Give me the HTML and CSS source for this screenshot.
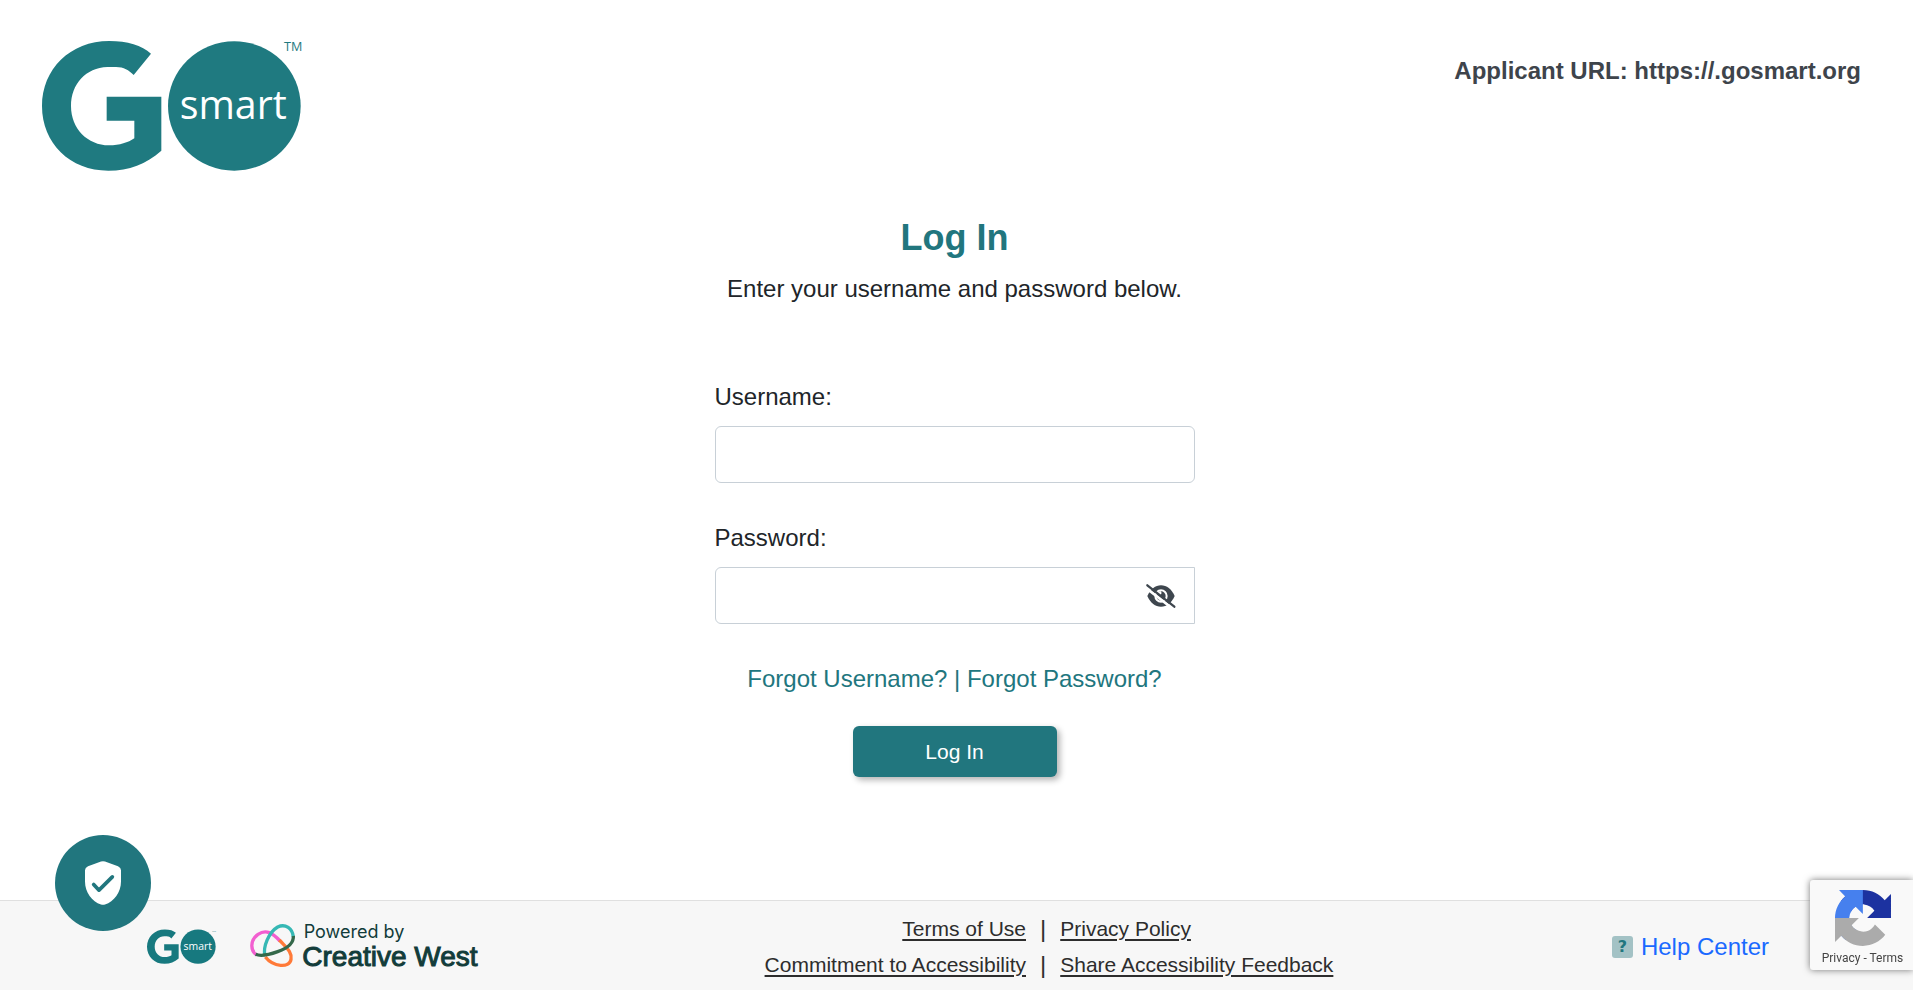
FILE: index.html
```html
<!DOCTYPE html>
<html lang="en">
<head>
<meta charset="utf-8">
<title>GO Smart - Log In</title>
<meta name="viewport" content="width=device-width, initial-scale=1">
<link rel="stylesheet" href="styles.css">
</head>
<body>
<header class="site-header">
  <svg class="logo" viewBox="66 60 780 393" role="img" aria-label="GO smart">
    <path fill="currentColor" d="M393 101L341 165C326 150 312 141 288 141H262C198 143 153 192 153 258C153 326 203 376 267 376C300 376 324 368 343 355V302H260V230H424V392C378 432 328 452 265 452C150 452 66 370 66 258C66 148 150 63 268 63C322 63 366 76 393 101Z"/>
    <ellipse cx="643" cy="258" rx="199" ry="194" fill="currentColor"/>
    <text class="logo-word" x="479" y="298" font-size="118">smart</text>
    <text class="logo-tm" x="792" y="92" font-size="38">TM</text>
  </svg>
  <p class="applicant-url">Applicant URL: https://.gosmart.org</p>
</header>

<main class="login">
  <h1 class="login-title">Log In</h1>
  <p class="login-intro">Enter your username and password below.</p>
  <form class="login-form">
    <div class="field">
      <label for="username">Username:</label>
      <input class="text-input" id="username" type="text" autocomplete="username">
    </div>
    <div class="field">
      <label for="password">Password:</label>
      <div class="password-box">
        <input class="password-input" id="password" type="password" autocomplete="current-password">
        <button class="toggle" type="button" aria-label="Show password">
          <svg width="30" height="24" viewBox="18 14 90 72">
            <path fill="currentColor" d="M22 50C32 29 46 18 63 18S95 30 104 50C95 71 80 82 63 82S31 71 22 50Z"/>
            <circle cx="63" cy="50" r="17" fill="none" stroke="#fff" stroke-width="6"/>
            <path fill="#fff" d="M52 38A15 15 0 0 1 63 36Q67 44 60 48Z"/>
            <path fill="none" stroke="#fff" stroke-width="8" d="M16 24L98 88"/>
            <path fill="none" stroke="currentColor" stroke-width="7" stroke-linecap="round" d="M22 18L103 82"/>
          </svg>
        </button>
      </div>
    </div>
    <p class="recover"><a href="#forgot-username">Forgot Username?</a> | <a href="#forgot-password">Forgot Password?</a></p>
    <button class="submit" type="submit">Log In</button>
  </form>
</main>

<footer class="site-footer">
  <div class="brands">
    <svg class="logo-small" viewBox="66 60 780 393" role="img" aria-label="GO smart">
      <path fill="currentColor" d="M393 101L341 165C326 150 312 141 288 141H262C198 143 153 192 153 258C153 326 203 376 267 376C300 376 324 368 343 355V302H260V230H424V392C378 432 328 452 265 452C150 452 66 370 66 258C66 148 150 63 268 63C322 63 366 76 393 101Z"/>
      <ellipse cx="643" cy="258" rx="199" ry="194" fill="currentColor"/>
      <text class="logo-word" x="479" y="298" font-size="118">smart</text>
      <text class="logo-tm" x="805" y="88" font-size="28">TM</text>
    </svg>
    <svg class="creative-west" viewBox="60 45 690 132" role="img" aria-label="Powered by Creative West">
      <g fill="none" stroke-width="10">
        <path stroke="#f25fd0" d="M80 138C61 126 59 94 84 76C108 60 128 72 150 96"/>
        <path stroke="#ff7a38" d="M148 93C171 118 187 130 183 151C178 178 130 174 106 144"/>
        <path stroke="#36b8b4" d="M105 140C98 115 116 70 143 54C166 43 188 58 190 84"/>
        <path stroke="#34684a" d="M190 81C192 105 168 119 143 128C118 137 91 142 77 136"/>
      </g>
      <text class="cw-powered" x="221" y="87" font-size="54">Powered by</text>
      <text class="cw-name" x="217" y="170" font-size="84">Creative West</text>
    </svg>
  </div>
  <nav class="links" aria-label="Legal">
    <a href="#terms">Terms of Use</a><span class="bar">|</span><a href="#privacy">Privacy Policy</a>
    <a href="#commitment">Commitment to Accessibility</a><span class="bar">|</span><a href="#feedback">Share Accessibility Feedback</a>
  </nav>
  <a class="help" href="#help"><span class="help-icon" aria-hidden="true">?</span>Help Center</a>
</footer>

<button class="shield" type="button" aria-label="Accessibility and privacy">
  <svg width="36" height="44" viewBox="165 123 108 131">
    <path fill="#fff" d="M213 124Q219 122 225 124L264 138Q273 142 273 150V184C273 216 252 245 225 253Q219 255 213 253C186 245 165 216 165 184V150Q165 142 174 138Z"/>
    <path fill="none" stroke="#21767e" stroke-width="11" stroke-linecap="round" stroke-linejoin="round" d="M191 193L207 210L247 170"/>
  </svg>
</button>

<aside class="recaptcha">
  <svg width="56" height="56" viewBox="0 0 64 64">
    <path fill="#1c32a0" d="M64 31.955l-.033-1.370V4.687l-7.160 7.160C50.948 4.674 42.033.093 32.050.093c-10.400 0-19.622 4.960-25.458 12.640l11.736 11.860a15.550 15.550 0 0 1 4.754-5.334c2.050-1.600 4.952-2.906 8.968-2.906.485 0 .860.057 1.135.163 4.976.393 9.288 3.140 11.828 7.124l-8.307 8.307L64 31.953"/>
    <path fill="#4680ee" d="M31.862.094l-1.370.033H4.594l7.160 7.160C4.580 13.147 0 22.060 0 32.046c0 10.400 4.960 19.622 12.640 25.458L24.500 45.768a15.550 15.550 0 0 1-5.334-4.754c-1.600-2.050-2.906-4.952-2.906-8.968 0-.485.057-.860.163-1.135.393-4.976 3.140-9.288 7.124-11.828l8.307 8.307L31.860.095"/>
    <path fill="#ababab" d="M.001 32.045l.033 1.370v25.898l7.160-7.160c5.860 7.173 14.774 11.754 24.760 11.754 10.400 0 19.622-4.960 25.458-12.640l-11.736-11.860a15.550 15.550 0 0 1-4.754 5.334c-2.050 1.600-4.952 2.906-8.968 2.906-.485 0-.860-.057-1.135-.163-4.976-.393-9.288-3.140-11.828-7.124l8.307-8.307L0 32.047"/>
  </svg>
  <p class="recaptcha-links"><a href="#g-privacy">Privacy</a> - <a href="#g-terms">Terms</a></p>
</aside>
</body>
</html>
```
FILE: styles.css
```css
* { box-sizing: border-box; }

body {
  margin: 0;
  min-height: 100vh;
  display: flex;
  flex-direction: column;
  background: #fff;
  color: #212529;
  font: 24px/36px "Liberation Sans", Arial, sans-serif;
}

p, h1 { margin: 0; }
a { color: inherit; text-decoration: none; }
button { border: 0; padding: 0; font: inherit; cursor: pointer; }
svg { display: block; flex: none; overflow: visible; }

.logo-word { fill: #fff; font-family: "Open Sans", "Noto Sans", sans-serif; }
.logo-tm { fill: currentColor; font-family: "Open Sans", "Noto Sans", sans-serif; }

.site-header {
  display: flex;
  justify-content: space-between;
  align-items: flex-start;
  padding: 40px 52px 45px 42px;
}
.logo { width: 260px; height: 131px; color: #1f7a80; }
.applicant-url { padding-top: 13px; font-weight: 700; color: #3e444b; }

.login {
  flex: 1;
  display: flex;
  flex-direction: column;
  align-items: center;
  padding-right: 4px;
}
.login-title {
  margin-bottom: 12px;
  color: #21767e;
  font-size: 36px;
  line-height: 43px;
}
.login-intro { margin-bottom: 72px; }
.login-form {
  width: 100%;
  max-width: 480px;
  display: flex;
  flex-direction: column;
}
.field {
  display: flex;
  flex-direction: column;
  gap: 11px;
  margin-bottom: 37px;
}
.text-input, .password-box {
  width: 100%;
  height: 57px;
  border: 1px solid #c8d0d7;
  border-radius: 6px;
  background: #fff;
}
.text-input { padding: 8px 16px; font: inherit; color: inherit; }
.password-box { display: flex; border-radius: 6px 0 0 6px; }
.password-input {
  flex: 1;
  min-width: 0;
  border: 0;
  border-radius: 6px;
  padding: 8px 16px;
  background: none;
  font: inherit;
  color: inherit;
}
.toggle { padding: 0 18px; background: none; color: #3e464e; }
.recover { margin-bottom: 29px; text-align: center; color: #21767e; }
.submit {
  align-self: center;
  width: 204px;
  height: 51px;
  border-radius: 6px;
  background: #21767e;
  box-shadow: 3px 3px 6px rgba(0, 0, 0, .3);
  color: #fff;
  font-size: 21px;
}

.site-footer {
  display: flex;
  flex-wrap: wrap;
  justify-content: space-between;
  align-items: center;
  padding: 10px 144px 7px 147px;
  border-top: 1px solid #e0e0e0;
  background: #f7f7f7;
}
.brands { display: flex; align-items: center; gap: 34px; padding-bottom: 2px; }
.logo-small { width: 69px; height: 35px; color: #17797f; }
.creative-west { width: 230px; height: 44px; }
.cw-powered { fill: #123c3a; font-family: Inter, "Liberation Sans", sans-serif; }
.cw-name {
  fill: #123c3a;
  stroke: #123c3a;
  stroke-width: 3px;
  font-family: "Liberation Sans", Arial, sans-serif;
}

.links {
  display: grid;
  grid-template-columns: auto auto auto;
  column-gap: 14px;
  margin-left: 6px;
  font-size: 21px;
  color: #2d2d2d;
}
.links a { text-decoration: underline; text-decoration-thickness: 2px; text-underline-offset: 3px; }
.links a:nth-child(3n + 1) { justify-self: end; }
.bar { font-size: 24px; }

.help { display: flex; align-items: center; gap: 8px; color: #1a69ff; }
.help-icon {
  width: 21px;
  height: 22px;
  border-radius: 3px;
  background: #a3c2c5;
  color: #21767e;
  font: 700 16px/22px "DejaVu Sans", sans-serif;
  text-align: center;
}

.shield {
  position: fixed;
  left: 55px;
  bottom: 59px;
  width: 96px;
  height: 96px;
  display: grid;
  place-items: center;
  border-radius: 50%;
  background: #21767e;
}

.recaptcha {
  position: fixed;
  right: 0;
  bottom: 20px;
  width: 103px;
  height: 90px;
  display: flex;
  flex-direction: column;
  align-items: center;
  padding: 10px 0 0 2px;
  border-radius: 3px 0 0 3px;
  background: #f9f9f9;
  box-shadow: 0 0 7px #777;
}
.recaptcha-links {
  padding-top: 4px;
  font: 12px/16px Roboto, sans-serif;
  color: #444;
  white-space: nowrap;
}
```
